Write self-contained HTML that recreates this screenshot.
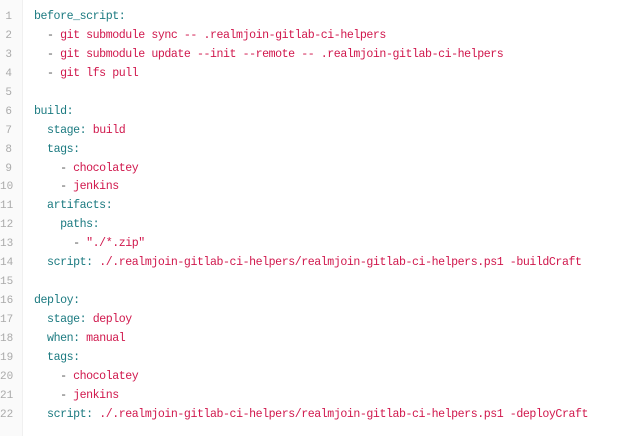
<!DOCTYPE html>
<html><head><style>
body{margin:0;background:#fff;width:640px;height:436px;overflow:hidden;font-family:"Liberation Mono",monospace;font-size:11.6px;letter-spacing:-0.44px;}
.g{position:absolute;left:0;top:0;width:22px;height:436px;background:#fafafa;border-right:1px solid #f0f0f0;}
.wrap{position:absolute;top:8px;left:0;}
.l{height:18.95px;line-height:18.95px;white-space:pre;position:relative;}
.n{position:absolute;left:0;width:12px;text-align:right;color:#aaa;letter-spacing:0;font-size:11px;}
.c{position:absolute;left:34px;color:#555;}
.k{color:#1b7a80}.s{color:#d0174c}
</style></head><body>
<div class="g"></div>
<div class="wrap">
<div class="l"><span class="n">1</span><span class="c"><span class="k">before_script:</span></span></div>
<div class="l"><span class="n">2</span><span class="c">  - <span class="s">git submodule sync -- .realmjoin-gitlab-ci-helpers</span></span></div>
<div class="l"><span class="n">3</span><span class="c">  - <span class="s">git submodule update --init --remote -- .realmjoin-gitlab-ci-helpers</span></span></div>
<div class="l"><span class="n">4</span><span class="c">  - <span class="s">git lfs pull</span></span></div>
<div class="l"><span class="n">5</span><span class="c"></span></div>
<div class="l"><span class="n">6</span><span class="c"><span class="k">build:</span></span></div>
<div class="l"><span class="n">7</span><span class="c">  <span class="k">stage:</span> <span class="s">build</span></span></div>
<div class="l"><span class="n">8</span><span class="c">  <span class="k">tags:</span></span></div>
<div class="l"><span class="n">9</span><span class="c">    - <span class="s">chocolatey</span></span></div>
<div class="l"><span class="n">10</span><span class="c">    - <span class="s">jenkins</span></span></div>
<div class="l"><span class="n">11</span><span class="c">  <span class="k">artifacts:</span></span></div>
<div class="l"><span class="n">12</span><span class="c">    <span class="k">paths:</span></span></div>
<div class="l"><span class="n">13</span><span class="c">      - <span class="s">"./*.zip"</span></span></div>
<div class="l"><span class="n">14</span><span class="c">  <span class="k">script:</span> <span class="s">./.realmjoin-gitlab-ci-helpers/realmjoin-gitlab-ci-helpers.ps1 -buildCraft</span></span></div>
<div class="l"><span class="n">15</span><span class="c"></span></div>
<div class="l"><span class="n">16</span><span class="c"><span class="k">deploy:</span></span></div>
<div class="l"><span class="n">17</span><span class="c">  <span class="k">stage:</span> <span class="s">deploy</span></span></div>
<div class="l"><span class="n">18</span><span class="c">  <span class="k">when:</span> <span class="s">manual</span></span></div>
<div class="l"><span class="n">19</span><span class="c">  <span class="k">tags:</span></span></div>
<div class="l"><span class="n">20</span><span class="c">    - <span class="s">chocolatey</span></span></div>
<div class="l"><span class="n">21</span><span class="c">    - <span class="s">jenkins</span></span></div>
<div class="l"><span class="n">22</span><span class="c">  <span class="k">script:</span> <span class="s">./.realmjoin-gitlab-ci-helpers/realmjoin-gitlab-ci-helpers.ps1 -deployCraft</span></span></div>
</div>
</body></html>
